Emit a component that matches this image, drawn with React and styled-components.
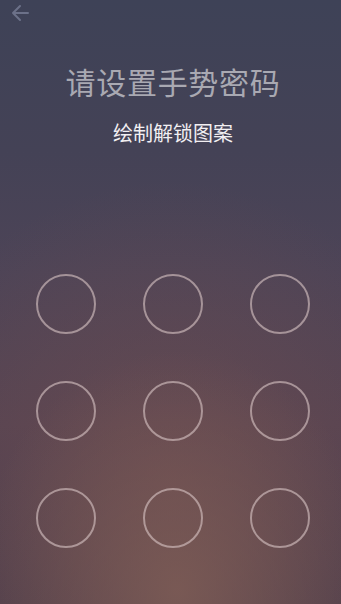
import React from 'react';
import styled, { createGlobalStyle } from 'styled-components';

const GlobalStyle = createGlobalStyle`
  html, body {
    margin: 0;
    padding: 0;
  }
  body {
    font-family: 'Noto Sans CJK SC', 'Noto Sans', sans-serif;
  }
`;

const Screen = styled.div`
  width: 100%;
  min-height: 100vh;
  box-sizing: border-box;
  display: flex;
  flex-direction: column;
  background:
    radial-gradient(ellipse 60% 40% at 52% 98%, rgba(128, 94, 86, 0.8), rgba(128, 94, 86, 0) 100%),
    radial-gradient(ellipse 85% 50% at 50% 80%, rgba(112, 78, 80, 0.65), rgba(112, 78, 80, 0) 100%),
    linear-gradient(to bottom, #3e4257 0%, #444256 25%, #4d4457 45%, #554352 70%, #4c3d4b 100%);
`;

const TopBar = styled.header`
  height: 26px;
  display: flex;
  align-items: center;
  padding-left: 11px;
`;

const BackButton = styled.button`
  border: 0;
  padding: 0;
  background: none;
  display: flex;
  cursor: pointer;
`;

const Content = styled.main`
  display: flex;
  flex-direction: column;
  align-items: center;
  padding-left: 5px;
`;

const Title = styled.h1`
  margin: 40px 0 0;
  font-size: 30px;
  line-height: 30px;
  font-weight: 400;
  color: #a9a9b2;
  letter-spacing: 0.7px;
`;

const Subtitle = styled.p`
  margin: 27px 0 0;
  font-size: 20px;
  line-height: 20px;
  color: #f2eff2;
`;

const Pad = styled.div`
  margin-top: 131px;
  display: grid;
  grid-template-columns: repeat(3, 60px);
  grid-auto-rows: 60px;
  column-gap: 47px;
  row-gap: 47px;
`;

const Dot = styled.div`
  box-sizing: border-box;
  width: 60px;
  height: 60px;
  border-radius: 50%;
  border: 2px solid rgba(215, 195, 195, 0.62);
`;

const BackIcon = () => (
  <svg width="18" height="18" viewBox="0 0 18 18" fill="none">
    <path
      d="M17 9H2M9 2L2 9l7 7"
      stroke="#6c7189"
      strokeWidth="2"
      strokeLinecap="round"
      strokeLinejoin="round"
    />
  </svg>
);

export default function App() {
  return (
    <>
      <GlobalStyle />
      <Screen>
        <TopBar>
          <BackButton aria-label="返回">
            <BackIcon />
          </BackButton>
        </TopBar>
        <Content>
          <Title>请设置手势密码</Title>
          <Subtitle>绘制解锁图案</Subtitle>
          <Pad>
            {Array.from({ length: 9 }, (_, i) => (
              <Dot key={i} />
            ))}
          </Pad>
        </Content>
      </Screen>
    </>
  );
}
